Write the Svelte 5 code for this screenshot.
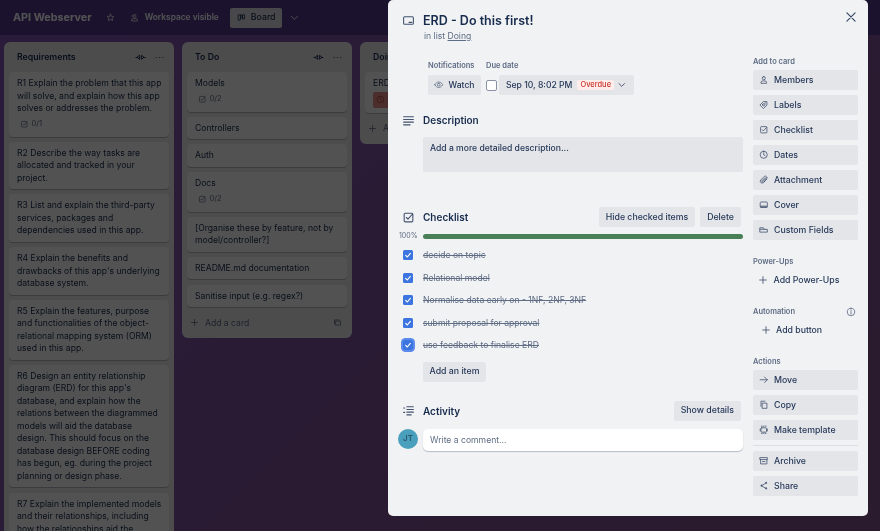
<script>
  const ic = {
    card: 'M3 7a2 2 0 0 1 2-2h14a2 2 0 0 1 2 2v10a2 2 0 0 1-2 2H5a2 2 0 0 1-2-2z M13 15.5h5',
    desc: 'M3 5h18 M3 10h18 M3 15h18 M3 20h12',
    check: 'M4 6a2 2 0 0 1 2-2h12a2 2 0 0 1 2 2v12a2 2 0 0 1-2 2H6a2 2 0 0 1-2-2z M8 12l3 3 8-9',
    activity: 'M9 5h12 M9 10h12 M9 15h12 M9 20h8 M3 7.5h2 M3 15.5h2',
    eye: 'M2 12c3-5 6.5-7 10-7s7 2 10 7c-3 5-6.5 7-10 7s-7-2-10-7z M12 8.5a3.5 3.5 0 1 0 0 7 3.5 3.5 0 0 0 0-7z',
    clock: 'M12 3a9 9 0 1 0 0 18 9 9 0 0 0 0-18z M12 7v5.5l3.5 2',
    person: 'M12 4a4 4 0 1 0 0 8 4 4 0 0 0 0-8z M5 20v-2a4 4 0 0 1 4-3h6a4 4 0 0 1 4 3v2z',
    tag: 'M3 12l8-8h9v9l-8 8z M15.5 7.5h1 M9 12a3 3 0 1 0 6 0 3 3 0 0 0-6 0z',
    clip: 'M19 11l-8 8a4.5 4.5 0 0 1-6.5-6.5l9-9a3 3 0 0 1 4.5 4.5l-9 9a1.5 1.5 0 0 1-2-2l8-8 M21 7l-9 12',
    cover: 'M3 7a2 2 0 0 1 2-2h14a2 2 0 0 1 2 2v10a2 2 0 0 1-2 2H5a2 2 0 0 1-2-2z M4 15.5h16 M4 17.5h16',
    fields: 'M3 7h8l2 4h8v7H3z M3 11h10',
    plus: 'M12 4v16 M4 12h16',
    info: 'M12 3a9 9 0 1 0 0 18 9 9 0 0 0 0-18z M12 11v6 M12 7v1.5',
    arrow: 'M3 12h18 M14 5l7 7-7 7',
    copy: 'M9 8h11v13H9z M5 16V3h10',
    template: 'M7 7h10a2 2 0 0 1 2 2v7a2 2 0 0 1-2 2H7a2 2 0 0 1-2-2V9a2 2 0 0 1 2-2z M3 10v5 M21 10v5 M6 3h2 M11 3h2 M16 3h2 M6 21h2 M11 21h2 M16 21h2',
    archive: 'M3 4h18v5H3z M4 9v11h16V9 M9 14h6',
    share: 'M18 5L6 12l12 7 M18 3.5a1.5 1.5 0 1 0 0 3 1.5 1.5 0 0 0 0-3z M6 10.5a1.5 1.5 0 1 0 0 3 1.5 1.5 0 0 0 0-3z M18 17.5a1.5 1.5 0 1 0 0 3 1.5 1.5 0 0 0 0-3z',
    star: 'M12 3l2.7 5.9 6.3.7-4.7 4.3 1.3 6.3L12 17l-5.6 3.2 1.3-6.3L3 9.6l6.3-.7z',
    people: 'M12 4a4 4 0 1 0 0 8 4 4 0 0 0 0-8z M4 20v-2a4 4 0 0 1 4-3h8a4 4 0 0 1 4 3v2z M8 8H5',
    board: 'M4 5h5v14H4z M11 5h3v8h-3z M16 5h4v11h-4z',
    chev: 'M5 9l7 7 7-7',
    close: 'M5 5l14 14 M19 5L5 19',
    collapse: 'M2 12h3 M10 8v8l-5-4z M14 8v8l5-4z M19 12h3',
    dots: 'M3 12h1 M11.5 12h1 M20 12h1',
    tplcard: 'M8 8h12v11H8z M4 16V5h12'
  };

  const lists = [
    { title: 'Requirements', cards: [
      { t: 'R1 Explain the problem that this app will solve, and explain how this app solves or addresses the problem.', n: '0/1' },
      { t: 'R2 Describe the way tasks are allocated and tracked in your project.' },
      { t: 'R3 List and explain the third-party services, packages and dependencies used in this app.' },
      { t: "R4 Explain the benefits and drawbacks of this app's underlying database system." },
      { t: 'R5 Explain the features, purpose and functionalities of the object-relational mapping system (ORM) used in this app.' },
      { t: "R6 Design an entity relationship diagram (ERD) for this app's database, and explain how the relations between the diagrammed models will aid the database design. This should focus on the database design BEFORE coding has begun, eg. during the project planning or design phase." },
      { t: 'R7 Explain the implemented models and their relationships, including how the relationships aid the database implementation.' }
    ]},
    { title: 'To Do', add: true, cards: [
      { t: 'Models', n: '0/2' }, { t: 'Controllers' }, { t: 'Auth' }, { t: 'Docs', n: '0/2' },
      { t: '[Organise these by feature, not by model/controller?]' }, { t: 'README.md documentation' }, { t: 'Sanitise input (e.g. regex?)' }
    ]},
    { title: 'Doing', add: true, cards: [ { t: 'ERD - Do this first!', due: 'Sep 10' } ]}
  ];

  const addTo = [['person','Members'],['tag','Labels'],['check','Checklist'],['clock','Dates'],['clip','Attachment'],['cover','Cover'],['fields','Custom Fields']];
  const items = ['decide on topic','Relational model','Normalise data early on - 1NF, 2NF, 3NF','submit proposal for approval','use feedback to finalise ERD'];
</script>

{#snippet icon(name, size = 10)}
  <svg class="i" width={size} height={size} viewBox="0 0 24 24"><path d={ic[name]} /></svg>
{/snippet}

<div class="page">
  <header class="top">
    <h1>API Webserver</h1>
    <span class="t-star">{@render icon('star', 9)}</span>
    <span class="t-vis">{@render icon('people', 9)}<b>Workspace visible</b></span>
    <span class="t-board">{@render icon('board', 9)}<b>Board</b></span>
    <span class="t-chev">{@render icon('chev', 11)}</span>
  </header>

  <main class="board">
    {#each lists as l}
      <section class="list">
        <div class="l-head">
          <h2>{l.title}</h2>
          <span class="l-ic">{@render icon('collapse', 11)}{@render icon('dots', 9)}</span>
        </div>
        {#each l.cards as c}
          <article class="tcard">
            <p>{c.t}</p>
            {#if c.n}<div class="badge">{@render icon('check', 8.5)}<span>{c.n}</span></div>{/if}
            {#if c.due}<div class="badge due">{@render icon('clock', 9)}<span>{c.due}</span></div>{/if}
          </article>
        {/each}
        {#if l.add}
          <div class="addcard">{@render icon('plus', 9)}<span>Add a card</span><span class="tpl">{@render icon('tplcard', 9)}</span></div>
        {/if}
      </section>
    {/each}
  </main>

  <div class="overlay"></div>

  <div class="modal">
    <button class="x">{@render icon('close', 14)}</button>
    <div class="m-head">
      <span class="gut big">{@render icon('card', 13)}</span>
      <div>
        <h3>ERD - Do this first!</h3>
        <p class="inlist">in list <u>Doing</u></p>
      </div>
    </div>

    <div class="m-body">
      <div class="m-main">
        <div class="meta">
          <div>
            <h4>Notifications</h4>
            <div class="btn watch">{@render icon('eye', 9.5)}<span>Watch</span></div>
          </div>
          <div>
            <h4>Due date</h4>
            <div class="due-row">
              <span class="box"></span>
              <div class="btn date"><span>Sep 10, 8:02 PM</span><em>Overdue</em>{@render icon('chev', 9.5)}</div>
            </div>
          </div>
        </div>

        <div class="sec s-desc">
          <span class="gut">{@render icon('desc', 13)}</span>
          <h5>Description</h5>
        </div>
        <div class="descbox">Add a more detailed description...</div>

        <div class="sec s-check">
          <span class="gut">{@render icon('check', 13)}</span>
          <h5>Checklist</h5>
          <div class="btn small">Hide checked items</div>
          <div class="btn small">Delete</div>
        </div>
        <div class="progress">
          <span>100%</span><div class="bar"></div>
        </div>
        <ul class="items">
          {#each items as it, n}
            <li>
              <span class="gut"><span class="tick" class:focus={n === 4}>
                <svg width="8" height="8" viewBox="0 0 24 24"><path d="M5 13l5 5 9-11" /></svg>
              </span></span>
              <s>{it}</s>
            </li>
          {/each}
        </ul>
        <div class="btn small additem">Add an item</div>

        <div class="sec s-act">
          <span class="gut">{@render icon('activity', 13)}</span>
          <h5>Activity</h5>
          <div class="btn small">Show details</div>
        </div>
        <div class="comment">
          <span class="avatar">JT</span>
          <div class="cbox">Write a comment...</div>
        </div>
      </div>

      <aside class="side">
        <h4>Add to card</h4>
        {#each addTo as [i, t]}
          <div class="btn sb">{@render icon(i, 9.5)}<span>{t}</span></div>
        {/each}

        <h4 class="g1">Power-Ups</h4>
        <div class="btn sb plain">{@render icon('plus', 10)}<span>Add Power-Ups</span></div>

        <h4 class="g1 auto">Automation {@render icon('info', 10)}</h4>
        <div class="btn sb plain ind">{@render icon('plus', 10)}<span>Add button</span></div>

        <h4 class="g1">Actions</h4>
        <div class="btn sb">{@render icon('arrow', 9.5)}<span>Move</span></div>
        <div class="btn sb">{@render icon('copy', 9.5)}<span>Copy</span></div>
        <div class="btn sb last">{@render icon('template', 9.5)}<span>Make template</span></div>
        <hr />
        <div class="btn sb">{@render icon('archive', 9.5)}<span>Archive</span></div>
        <div class="btn sb">{@render icon('share', 9.5)}<span>Share</span></div>
      </aside>
    </div>
  </div>
</div>

<style>
  :global(body) { margin: 0; background: #2b1b30; }
  * { box-sizing: border-box; }
  .page {
    position: relative; width: 880px; height: 531px; overflow: hidden;
    background: linear-gradient(135deg, #8354b8 0%, #84549f 55%, #86548f 100%);
    font-family: Inter, "Liberation Sans", sans-serif; font-size: 8.6px; line-height: 12.5px;
    color: #172b4d; filter: blur(0.4px);
  }
  .i { fill: none; stroke: currentColor; stroke-width: 2; stroke-linecap: round; stroke-linejoin: round; flex: none; display: block; }

  .top { height: 35px; background: #553d90; display: flex; align-items: center; padding-left: 13px; color: #fff; }
  .top h1 { margin: 0; font-size: 10.8px; font-weight: 700; line-height: 14px; }
  .top b { font-weight: 600; font-size: 8.35px; }
  .t-star { margin-left: 14px; }
  .t-vis { display: flex; align-items: center; gap: 6px; margin-left: 15px; }
  .t-board { display: flex; align-items: center; gap: 5px; margin-left: 11px; height: 20px; width: 52px; padding-left: 7px; background: #dfe1e6; border-radius: 2px; color: #172b4d; }
  .t-board b { font-weight: 500; font-size: 8.75px; }
  .t-chev { margin-left: 7px; }

  .board { display: flex; align-items: flex-start; gap: 8px; padding: 7px 0 0 4px; }
  .list { width: 170px; flex: none; background: #ebecf0; border-radius: 6px; padding: 0 5px; }
  .l-head { display: flex; justify-content: space-between; align-items: center; height: 30px; padding: 0 5px 0 8px; color: #172b4d; }
  .l-head h2 { margin: 0; font-size: 8.75px; font-weight: 600; }
  .l-ic { display: flex; gap: 9px; align-items: center; }
  .tcard { background: #fff; border-radius: 4px; padding: 5px 5px 5px 8px; margin-bottom: 5.2px; box-shadow: 0 1px 0 #091e4240; }
  .tcard p { margin: 0; }
  .badge { display: flex; align-items: center; gap: 3px; height: 17px; padding: 2px 3px 0; font-size: 7.5px; color: #5e6c84; }
  .badge.due { background: #ec9488; width: 60px; color: #b04632; height: 16px; padding: 0 3px; border-radius: 2px; margin-top: 2px; }
  .addcard { display: flex; align-items: center; gap: 6px; height: 31px; margin-top: -5px; color: #5e6c84; padding: 0 3px; }
  .tpl { margin-left: auto; padding-right: 2px; }

  .overlay { position: absolute; inset: 0; background: #000000ad; }

  .modal { position: absolute; left: 388px; top: 0; width: 480px; height: 516px; background: #f1f2f4; border-radius: 5px; padding-left: 10px; color: #253858; }
  .x { position: absolute; right: 10px; top: 10px; width: 14px; height: 14px; padding: 0; border: 0; background: none; color: #344563; }
  .gut { width: 25px; flex: none; display: flex; padding-left: 4px; color: #42526e; }
  .m-head { display: flex; padding-top: 13px; height: 50px; }
  .m-head .big { padding-top: 1px; }
  .m-head h3 { margin: 0; font-size: 12.5px; line-height: 15px; font-weight: 600; color: #172b4d; }
  .inlist { margin: 2px 0 0 1px; line-height: 12px; color: #5e6c84; }
  .m-body { display: flex; }
  .m-main { width: 345px; flex: none; }
  .meta { display: flex; gap: 5px; padding: 11px 0 0 30px; }
  h4 { margin: 0; font-size: 7.5px; line-height: 10px; font-weight: 600; color: #5e6c84; }
  .btn { background: #e4e5e9; border-radius: 2px; display: flex; align-items: center; font-weight: 500; color: #253858; white-space: nowrap; }
  .meta h4 { margin-bottom: 4px; }
  .watch { height: 20px; width: 53px; padding-left: 6px; gap: 5px; color: #253858; }
  .watch .i { color: #5e6c84; }
  .due-row { display: flex; align-items: center; gap: 2px; }
  .box { width: 11px; height: 11px; background: #fff; border: 1px solid #8993a4; border-radius: 2px; }
  .date { height: 20px; width: 135px; padding-left: 7px; gap: 5px; }
  .date .i { margin-left: -2px; }
  .date em { font-style: normal; font-size: 7.5px; color: #c9372c; background: #ffeceb; padding: 0 3px; border-radius: 2px; line-height: 10px; }
  .sec { display: flex; align-items: center; gap: 5px; padding-right: 2px; }
  .sec .gut { margin-right: -5px; }
  .sec h5 { margin: 0 auto 0 0; font-size: 10px; line-height: 14px; font-weight: 600; color: #172b4d; }
  .s-desc { margin-top: 18px; height: 14px; }
  .descbox { margin: 10px 0 0 25px; width: 320px; height: 35px; padding: 5px 7px; background: #e4e5e9; border-radius: 2px; font-weight: 500; }
  .s-check { margin-top: 35px; height: 20px; }
  .small { height: 20px; padding: 0 7px; justify-content: center; font-size: 8.75px; }
  .progress { display: flex; align-items: center; margin-top: 6px; height: 6px; }
  .progress span { width: 25px; padding-left: 1px; font-size: 7px; color: #5e6c84; }
  .bar { width: 320px; height: 5px; background: #4a8058; border-radius: 3px; }
  .items { list-style: none; margin: 5px 0 0; padding: 0; }
  .items li { display: flex; align-items: center; height: 22.5px; }
  .items s { color: #5e6c84; font-size: 8.6px; }
  .items .gut { padding-left: 5px; }
  .tick { width: 10px; height: 10px; border-radius: 1.5px; background: #3c74e0; display: flex; align-items: center; justify-content: center; }
  .tick svg { fill: none; stroke: #fff; stroke-width: 3.5; stroke-linecap: round; stroke-linejoin: round; }
  .tick.focus { box-shadow: 0 0 0 2px #5a8aec; border-radius: 2.5px; }
  .additem { margin: 5px 0 0 25px; width: 63px; }
  .s-act { margin-top: 19px; height: 20px; }
  .comment { display: flex; margin-top: 8px; }
  .avatar { width: 20px; height: 20px; margin-right: 5px; border-radius: 50%; background: #4a9fbd; color: #285a70; font-weight: 600; font-size: 8px; display: flex; align-items: center; justify-content: center; }
  .cbox { width: 320px; height: 22px; background: #fff; border-radius: 5px; padding: 5px 7px; color: #5e6c84; box-shadow: 0 1px 1px #091e4240; }

  .side { width: 105px; flex: none; margin-left: 10px; padding-top: 7px; }
  .side h4 { margin-bottom: 3px; line-height: 10px; }
  .sb { height: 20px; margin-bottom: 5px; padding-left: 6px; gap: 5.5px; font-size: 8.75px; }
  .sb .i { color: #42526e; }
  .plain { background: none; padding-left: 5px; }
  .ind { padding-left: 8px; gap: 5px; }
  .side .g1 { margin-top: 17px; }
  .auto { display: flex; justify-content: space-between; padding-right: 2px; align-items: center; }
  .last { margin-bottom: 0; }
  hr { border: 0; height: 1px; background: #dcdfe4; margin: 5px 0 5px; }
</style>
